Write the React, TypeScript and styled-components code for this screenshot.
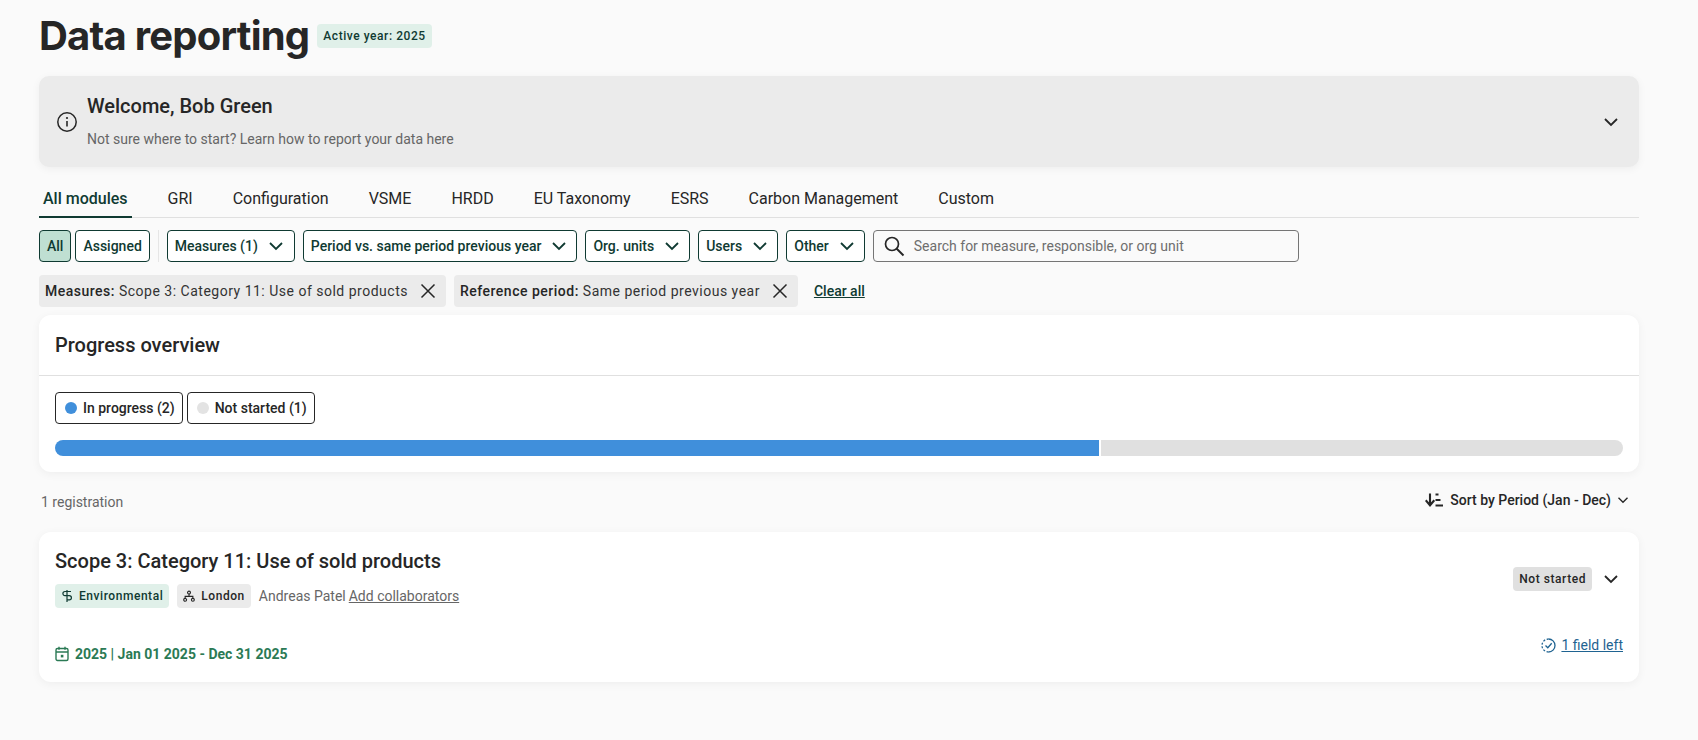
import React from "react";
import styled, { createGlobalStyle } from "styled-components";

const Global = createGlobalStyle`
  html, body { margin: 0; padding: 0; background: #fafafa; }
  body { font-family: Roboto, "Liberation Sans", sans-serif; color: #262626; }
  * { box-sizing: border-box; }
`;

const Page = styled.div`
  width: 1698px;
  height: 740px;
  padding: 12px 59px 0 39px;
  overflow: hidden;
  display: flex;
  flex-direction: column;
`;

const TitleRow = styled.div`
  display: flex;
  align-items: center;
  gap: 8px;
  height: 47px;
`;

const Title = styled.h1`
  margin: 0;
  font-family: Inter, sans-serif;
  font-size: 40px;
  line-height: 47px;
  font-weight: 700;
  letter-spacing: -0.78px;
  color: #262626;
`;

const Badge = styled.span<{ $tone: "green" | "grey" | "mid" }>`
  display: inline-flex;
  align-items: center;
  gap: 6px;
  height: 24px;
  padding: 0 6px;
  border-radius: 4px;
  font-size: 12px;
  font-weight: 500;
  letter-spacing: 0.55px;
  white-space: nowrap;
  color: ${(p) => (p.$tone === "green" ? "#0f3a32" : "#262626")};
  background: ${(p) => (p.$tone === "green" ? "#e0f0e9" : p.$tone === "grey" ? "#ebebeb" : "#e0e0e0")};
`;

const Banner = styled.section`
  margin-top: 17px;
  height: 91px;
  border-radius: 10px;
  background: #ebebeb;
  box-shadow: 0 2px 8px rgba(0, 0, 0, 0.05);
  display: flex;
  align-items: center;
  padding: 0 20px 0 17px;
  gap: 9px;
`;

const BannerText = styled.div`
  flex: 1;
  display: flex;
  flex-direction: column;
  gap: 13px;
  padding-bottom: 1px;
`;

const BannerTitle = styled.div`
  font-size: 20px;
  line-height: 24px;
  font-weight: 500;
`;

const BannerSub = styled.div`
  font-size: 14px;
  line-height: 17px;
  color: #666;
`;

const Tabs = styled.nav`
  margin-top: 12px;
  height: 39px;
  display: flex;
  gap: 32px;
  border-bottom: 1px solid #e0e0e0;
`;

const Tab = styled.div<{ $active?: boolean }>`
  padding: 0 4px;
  font-size: 16px;
  line-height: 40px;
  height: 39px;
  white-space: nowrap;
  font-weight: ${(p) => (p.$active ? 500 : 400)};
  color: ${(p) => (p.$active ? "#0f3a32" : "#262626")};
  border-bottom: ${(p) => (p.$active ? "2px solid #0f3a32" : "none")};
`;

const FilterRow = styled.div`
  margin-top: 12px;
  display: flex;
  align-items: center;
  gap: 8px;
  height: 32px;
`;

const ToggleGroup = styled.div`
  display: flex;
  gap: 4px;
  padding-right: 8px;
  border-right: 1px solid #e6e6e6;
`;

const FilterButton = styled.button<{ $on?: boolean; $menu?: boolean }>`
  height: 32px;
  padding: 0 ${(p) => (p.$menu ? "9px" : "7px")} 0 7px;
  display: inline-flex;
  align-items: center;
  gap: 10px;
  border: 1px solid #0f3a32;
  border-radius: 4px;
  background: ${(p) => (p.$on ? "#bfdfd2" : "#fff")};
  color: #0f3a32;
  font-family: inherit;
  font-size: 14px;
  font-weight: 500;
  white-space: nowrap;
`;

const MeasuresButton = styled(FilterButton)`
  padding-right: 10px;
`;

const Search = styled.div`
  width: 426px;
  height: 32px;
  display: flex;
  align-items: center;
  gap: 9px;
  padding: 0 9px;
  border: 1px solid #757575;
  border-radius: 4px;
  background: #fafafa;
  font-size: 14px;
  color: #6e6e6e;
`;

const ChipRow = styled.div`
  margin-top: 13px;
  display: flex;
  align-items: center;
  gap: 8px;
  height: 32px;
`;

const Chip = styled.div`
  height: 32px;
  display: flex;
  align-items: center;
  gap: 12px;
  padding: 0 10px 0 6px;
  border-radius: 4px;
  background: #ebebeb;
  font-size: 14px;
  letter-spacing: 0.5px;
  color: #333;
  white-space: nowrap;
  b { font-weight: 500; color: #262626; }
`;

const ClearAll = styled.a`
  margin-left: 8px;
  font-size: 14px;
  font-weight: 500;
  color: #0f3a32;
  text-decoration: underline;
`;

const Card = styled.section`
  background: #fff;
  border-radius: 12px;
  box-shadow: 0 2px 10px rgba(0, 0, 0, 0.05);
`;

const ProgressCard = styled(Card)`
  margin-top: 8px;
  height: 157px;
`;

const CardHeader = styled.div`
  height: 61px;
  padding: 0 16px;
  display: flex;
  align-items: center;
  border-bottom: 1px solid #e0e0e0;
  font-size: 20px;
  font-weight: 500;
`;

const Legend = styled.div`
  padding: 16px 16px 0;
  display: flex;
  gap: 4px;
`;

const LegendItem = styled.div`
  height: 32px;
  display: flex;
  align-items: center;
  gap: 6px;
  padding: 0 7px 0 9px;
  border: 1px solid #262626;
  border-radius: 4px;
  font-size: 14px;
  font-weight: 500;
`;

const Dot = styled.span<{ $c: string }>`
  width: 12px;
  height: 12px;
  border-radius: 50%;
  background: ${(p) => p.$c};
`;

const Bar = styled.div`
  margin: 16px 16px 0;
  height: 16px;
  border-radius: 8px;
  overflow: hidden;
  display: flex;
  gap: 2px;
`;

const Segment = styled.div<{ $c: string; $grow: number }>`
  background: ${(p) => p.$c};
  flex: ${(p) => p.$grow} 1 0;
`;

const ListHead = styled.div`
  height: 60px;
  padding: 0 10px 0 2px;
  display: flex;
  align-items: center;
  justify-content: space-between;
`;

const Muted = styled.span`
  font-size: 14px;
  color: #666;
`;

const Sort = styled.div`
  display: flex;
  align-items: center;
  gap: 6px;
  font-size: 14px;
  font-weight: 500;
  margin-top: -4px;
`;

const RegCard = styled(Card)`
  height: 150px;
  padding: 17px 16px 16px;
  display: flex;
  flex-direction: column;
  justify-content: space-between;
`;

const RegTop = styled.div`
  display: flex;
  align-items: center;
  justify-content: space-between;
`;

const RegTitle = styled.div`
  font-size: 20px;
  line-height: 24px;
  font-weight: 500;
`;

const Meta = styled.div`
  margin-top: 11px;
  display: flex;
  align-items: center;
  gap: 8px;
`;

const Person = styled.span`
  font-size: 14px;
  color: #666;
  margin-right: -5px;
`;

const LinkGrey = styled.a`
  font-size: 14px;
  color: #666;
  text-decoration: underline;
`;

const RegStatus = styled.div`
  display: flex;
  align-items: center;
  gap: 11px;
  margin-right: 4px;
`;

const RegBottom = styled.div`
  display: flex;
  align-items: center;
  justify-content: space-between;
  padding-bottom: 4px;
`;

const DateText = styled.div`
  display: flex;
  align-items: center;
  gap: 6px;
  font-size: 14px;
  font-weight: 700;
  color: #2b7a55;
`;

const Fields = styled.a`
  display: flex;
  align-items: center;
  gap: 5px;
  font-size: 14px;
  color: #1f6391;
  margin-top: -18px;
  span { text-decoration: underline; }
`;

const Chevron = ({ size = 16, color = "currentColor", w = 1.8 }: { size?: number; color?: string; w?: number }) => (
  <svg width={size} height={size} viewBox="0 0 16 16" fill="none">
    <path d="M2 5l6 6 6-6" stroke={color} strokeWidth={w} />
  </svg>
);

const Close = () => (
  <svg width="16" height="16" viewBox="0 0 16 16" fill="none">
    <path d="M1.5 1.5l13 13M14.5 1.5l-13 13" stroke="#262626" strokeWidth="1.5" />
  </svg>
);

export default function App() {
  return (
    <Page>
      <Global />
      <TitleRow>
        <Title>Data reporting</Title>
        <Badge $tone="green">Active year: 2025</Badge>
      </TitleRow>

      <Banner>
        <svg width="22" height="22" viewBox="0 0 22 22" fill="none">
          <circle cx="11" cy="11" r="9.2" stroke="#262626" strokeWidth="1.5" />
          <path d="M11 10v5.5" stroke="#262626" strokeWidth="1.6" />
          <circle cx="11" cy="7" r="1.1" fill="#262626" />
        </svg>
        <BannerText>
          <BannerTitle>Welcome, Bob Green</BannerTitle>
          <BannerSub>Not sure where to start? Learn how to report your data here</BannerSub>
        </BannerText>
        <Chevron color="#262626" />
      </Banner>

      <Tabs>
        <Tab $active>All modules</Tab>
        <Tab>GRI</Tab>
        <Tab>Configuration</Tab>
        <Tab>VSME</Tab>
        <Tab>HRDD</Tab>
        <Tab>EU Taxonomy</Tab>
        <Tab>ESRS</Tab>
        <Tab>Carbon Management</Tab>
        <Tab>Custom</Tab>
      </Tabs>

      <FilterRow>
        <ToggleGroup>
          <FilterButton $on>All</FilterButton>
          <FilterButton>Assigned</FilterButton>
        </ToggleGroup>
        <MeasuresButton $menu>Measures (1) <Chevron /></MeasuresButton>
        <FilterButton $menu>Period vs. same period previous year <Chevron /></FilterButton>
        <FilterButton $menu>Org. units <Chevron /></FilterButton>
        <FilterButton $menu>Users <Chevron /></FilterButton>
        <FilterButton $menu>Other <Chevron /></FilterButton>
        <Search>
          <svg width="22" height="22" viewBox="0 0 22 22" fill="none">
            <circle cx="9" cy="9" r="6.5" stroke="#262626" strokeWidth="1.7" />
            <path d="M13.5 13.5 20.5 20.5" stroke="#262626" strokeWidth="2" />
          </svg>
          Search for measure, responsible, or org unit
        </Search>
      </FilterRow>

      <ChipRow>
        <Chip><span><b>Measures:</b> Scope 3: Category 11: Use of sold products</span><Close /></Chip>
        <Chip><span><b>Reference period:</b> Same period previous year</span><Close /></Chip>
        <ClearAll>Clear all</ClearAll>
      </ChipRow>

      <ProgressCard>
        <CardHeader>Progress overview</CardHeader>
        <Legend>
          <LegendItem><Dot $c="#408fdb" />In progress (2)</LegendItem>
          <LegendItem><Dot $c="#e3e3e3" />Not started (1)</LegendItem>
        </Legend>
        <Bar>
          <Segment $c="#408fdb" $grow={2} />
          <Segment $c="#e0e0e0" $grow={1} />
        </Bar>
      </ProgressCard>

      <ListHead>
        <Muted>1 registration</Muted>
        <Sort>
          <svg width="19" height="16" viewBox="0 0 19 16" fill="none">
            <path d="M5 1.5v11.5M.7 8.3 5 13.3l4.3-5" stroke="#262626" strokeWidth="2.1" />
            <path d="M10.5 2.5h3M10.5 8h5M10.5 13.5H18" stroke="#262626" strokeWidth="1.8" />
          </svg>
          Sort by Period (Jan - Dec)
          <Chevron size={12} color="#262626" />
        </Sort>
      </ListHead>

      <RegCard>
        <RegTop>
          <div>
            <RegTitle>Scope 3: Category 11: Use of sold products</RegTitle>
            <Meta>
              <Badge $tone="green">
                <svg width="12" height="14" viewBox="0 0 12 14" fill="none">
                  <path d="M6 1v12M10 2.5H4a2.1 2.1 0 0 0 0 4.2h4.3a2.1 2.1 0 0 1 0 4.2H6" stroke="#0f3a32" strokeWidth="1.2" />
                </svg>
                Environmental
              </Badge>
              <Badge $tone="grey">
                <svg width="12" height="12" viewBox="0 0 14 14" fill="none">
                  <circle cx="7" cy="3" r="1.7" stroke="#262626" strokeWidth="1.3" />
                  <circle cx="2.5" cy="11.5" r="1.7" stroke="#262626" strokeWidth="1.3" />
                  <circle cx="11.5" cy="11.5" r="1.7" stroke="#262626" strokeWidth="1.3" />
                  <path d="M7 4.7V7.5M2.5 9.8V7.5h9v2.3" stroke="#262626" strokeWidth="1.3" />
                </svg>
                London
              </Badge>
              <Person>Andreas Patel</Person>
              <LinkGrey>Add collaborators</LinkGrey>
            </Meta>
          </div>
          <RegStatus>
            <Badge $tone="mid">Not started</Badge>
            <Chevron color="#262626" />
          </RegStatus>
        </RegTop>
        <RegBottom>
          <DateText>
            <svg width="14" height="16" viewBox="0 0 14 16" fill="none">
              <rect x="1" y="2.5" width="12" height="12" rx="1.5" stroke="#2b7a55" strokeWidth="1.4" />
              <path d="M1 6h12M4 .8v3M10 .8v3" stroke="#2b7a55" strokeWidth="1.4" />
              <rect x="5.8" y="8.8" width="2.6" height="2.6" fill="#2b7a55" />
            </svg>
            2025 | Jan 01 2025 - Dec 31 2025
          </DateText>
          <Fields>
            <svg width="15" height="15" viewBox="0 0 15 15" fill="none">
              <path d="M7.5 1a6.5 6.5 0 0 1 0 13" stroke="#1f6391" strokeWidth="1.3" />
              <path d="M7.5 14a6.5 6.5 0 0 1 0-13" stroke="#1f6391" strokeWidth="1.3" strokeDasharray="2 1.6" />
              <path d="M4.5 7.5l2.3 2.3 3.9-4.5" stroke="#1f6391" strokeWidth="1.3" />
            </svg>
            <span>1 field left</span>
          </Fields>
        </RegBottom>
      </RegCard>
    </Page>
  );
}
